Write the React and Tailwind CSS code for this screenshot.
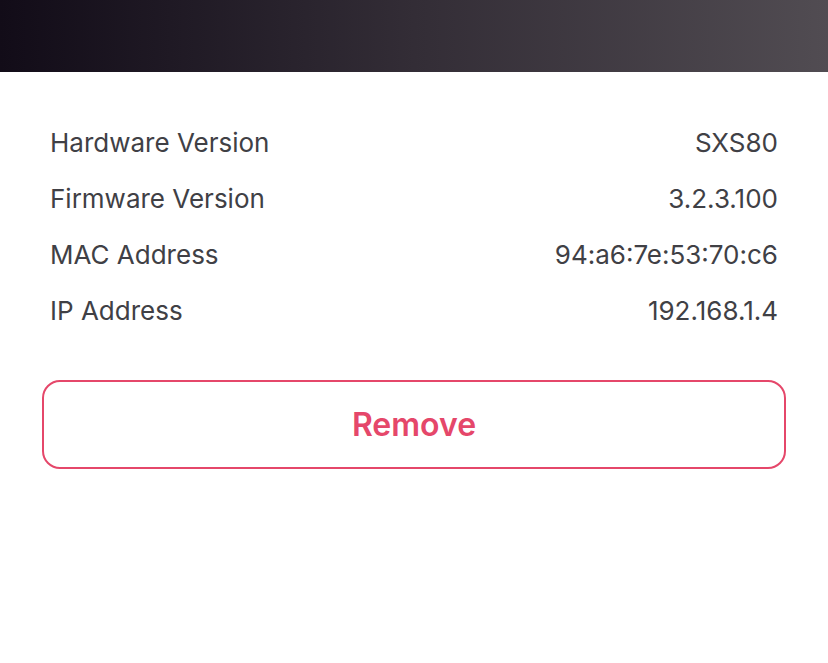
export default function App() {
  const rows = [
    ["Hardware Version", "SXS80"],
    ["Firmware Version", "3.2.3.100"],
    ["MAC Address", "94:a6:7e:53:70:c6"],
    ["IP Address", "192.168.1.4"],
  ];
  return (
    <div className="w-[828px] h-[663px] bg-white" style={{ fontFamily: "Inter, 'Noto Sans', sans-serif" }}>
      <div className="h-[72px] bg-gradient-to-r from-[#120c18] via-[#332d36] to-[#514c52]" />
      <div className="px-[50px] pt-[42px]">
        {rows.map(([k, v]) => (
          <div key={k} className="h-[56px] flex items-center justify-between text-[26px] text-[#404045]">
            <span>{k}</span>
            <span>{v}</span>
          </div>
        ))}
      </div>
      <div className="px-[42px] pt-[42px]">
        <div className="h-[89px] rounded-[18px] border-2 border-[#e5476a] flex items-center justify-center">
          <span className="text-[32px] font-semibold text-[#e5476a]">Remove</span>
        </div>
      </div>
    </div>
  );
}
